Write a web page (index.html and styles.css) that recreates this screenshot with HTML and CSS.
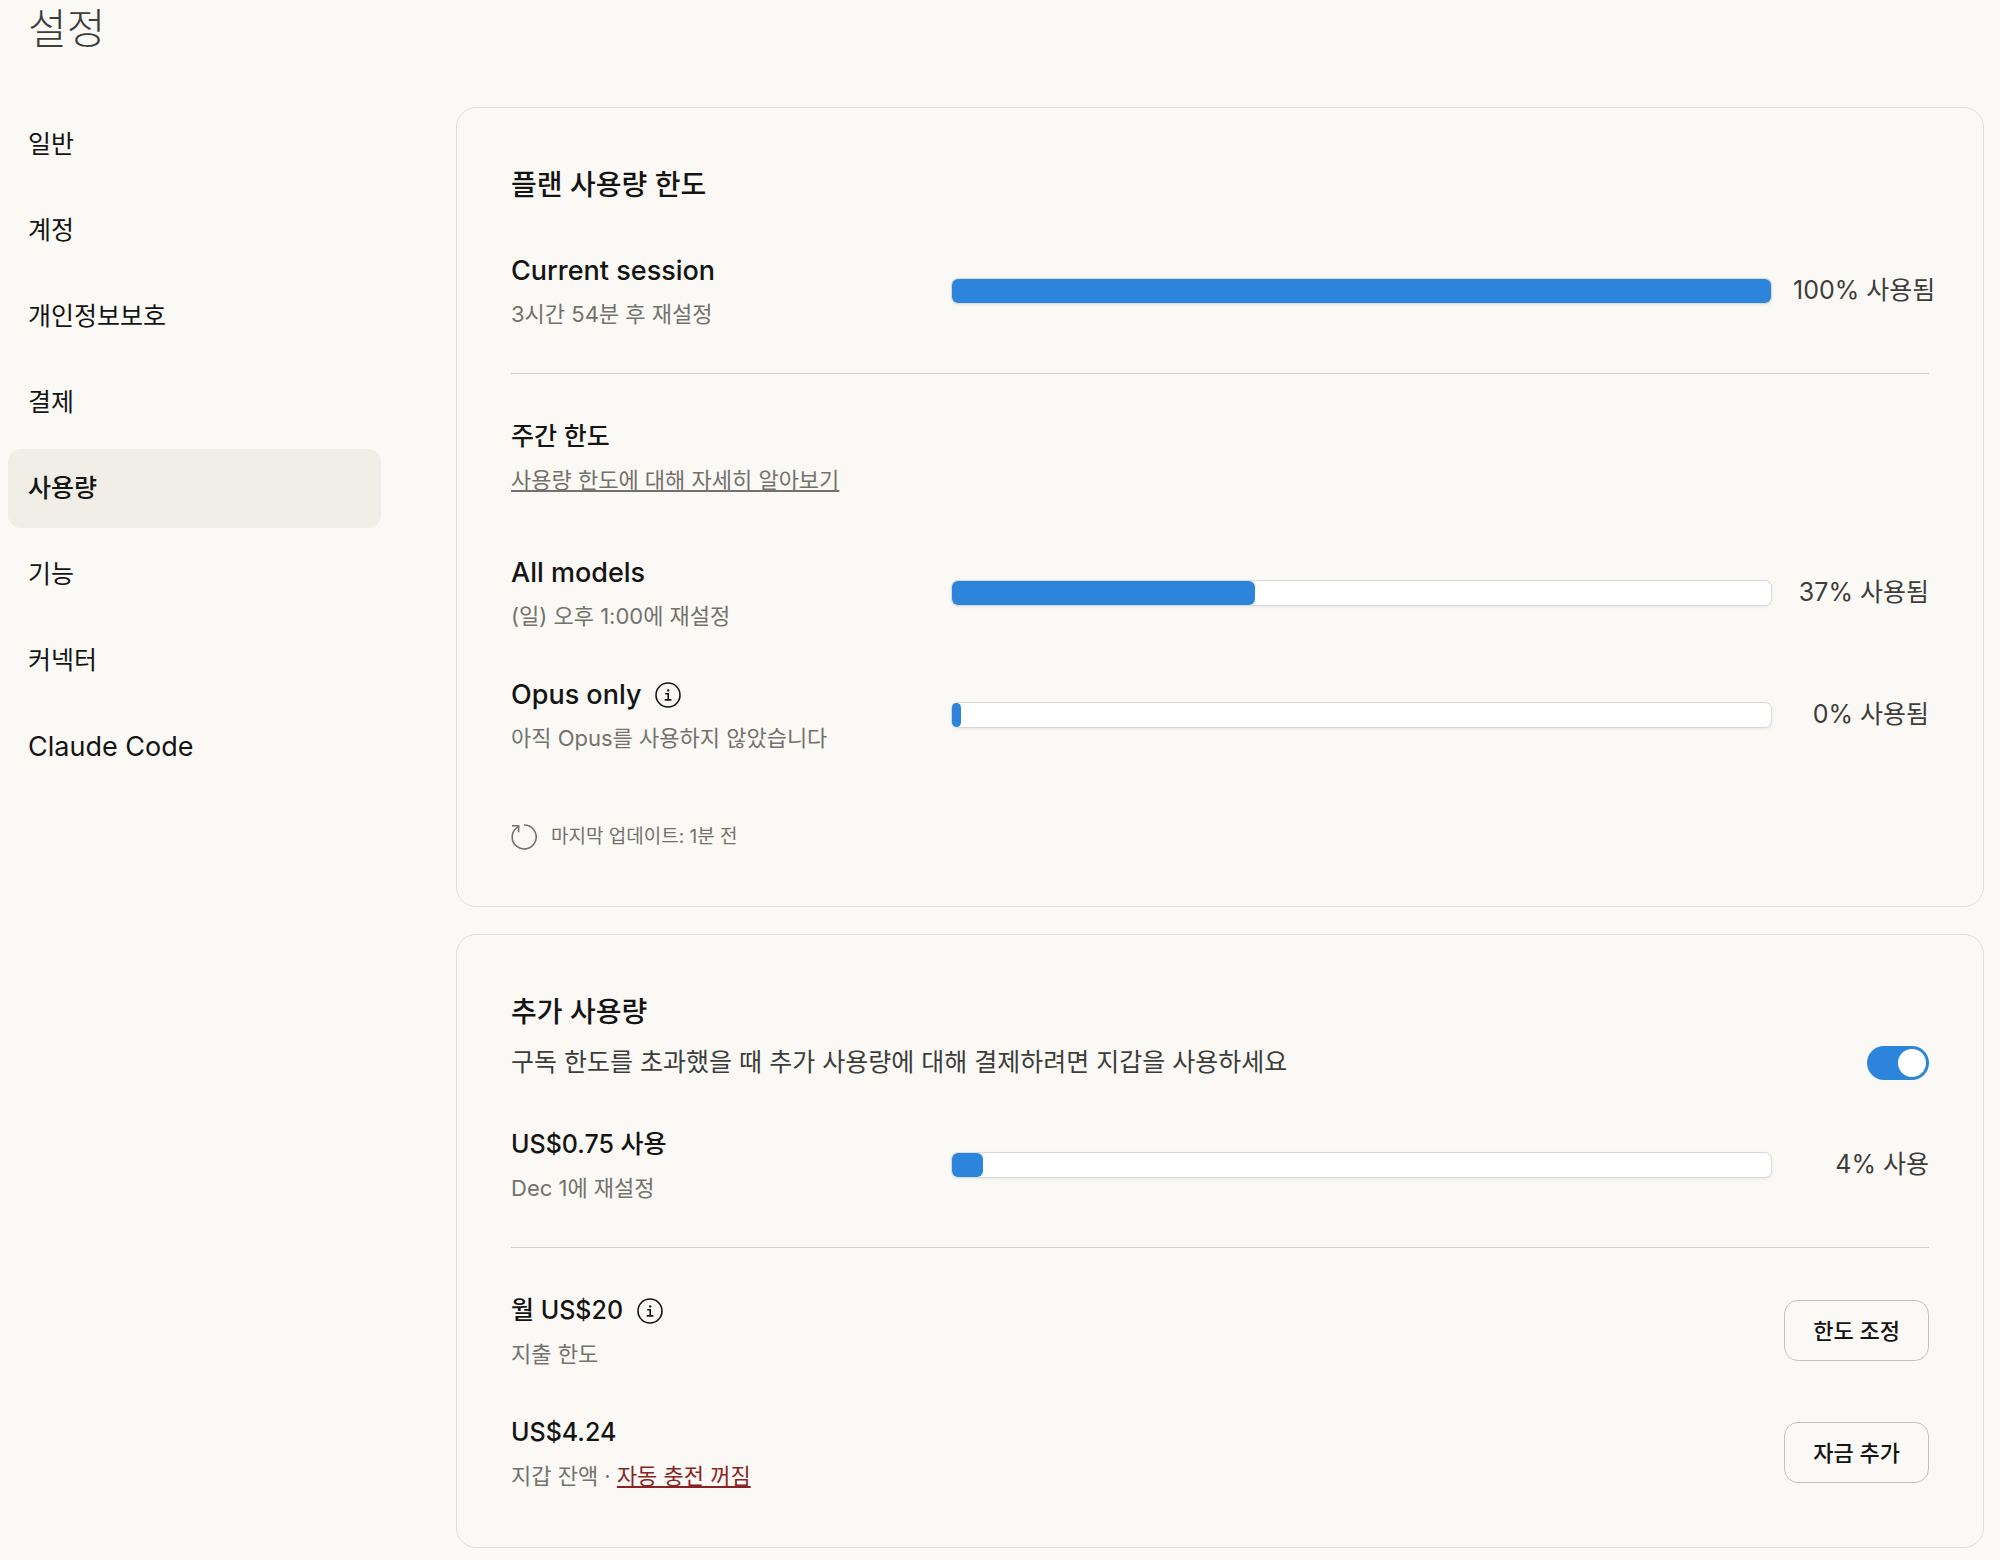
FILE: index.html
```html
<!DOCTYPE html>
<html lang="ko">
<head>
<meta charset="UTF-8" />
<meta name="viewport" content="width=device-width, initial-scale=1" />
<title>설정</title>
<link rel="stylesheet" href="styles.css">
</head>
<body>
  <h1>설정</h1>
  <div class="layout">
    <nav class="menu">
      <a href="#">일반</a>
      <a href="#">계정</a>
      <a href="#">개인정보보호</a>
      <a href="#">결제</a>
      <a href="#" class="active" aria-current="page">사용량</a>
      <a href="#">기능</a>
      <a href="#">커넥터</a>
      <a href="#" class="latin">Claude Code</a>
    </nav>

    <main>
      <section class="card">
        <h2>플랜 사용량 한도</h2>

        <div class="row">
          <div class="info">
            <div class="title latin" id="session">Current session</div>
            <div class="sub">3시간 54분 후 재설정</div>
          </div>
          <div class="bar" role="progressbar" aria-labelledby="session" aria-valuenow="100"><div class="fill" style="width: 100%"></div></div>
          <div class="value">100% 사용됨</div>
        </div>

        <hr>

        <div class="info weekly">
          <h3 class="title">주간 한도</h3>
          <a href="#" class="sub">사용량 한도에 대해 자세히 알아보기</a>
        </div>

        <div class="row">
          <div class="info">
            <div class="title latin" id="models">All models</div>
            <div class="sub">(일) 오후 1:00에 재설정</div>
          </div>
          <div class="bar" role="progressbar" aria-labelledby="models" aria-valuenow="37"><div class="fill" style="width: 37%"></div></div>
          <div class="value">37% 사용됨</div>
        </div>

        <div class="row">
          <div class="info">
            <div class="title latin">
              <span id="opus">Opus only</span>
              <svg class="icon" viewBox="0 0 26 26" fill="none" stroke="currentColor" stroke-width="1.6">
                <circle cx="13" cy="13" r="12"/>
                <path d="M10.2 11.7h3v6M9.7 17.9h6.7"/>
                <circle cx="13.2" cy="8.4" r="1.2" fill="currentColor" stroke="none"/>
              </svg>
            </div>
            <div class="sub">아직 Opus를 사용하지 않았습니다</div>
          </div>
          <div class="bar" role="progressbar" aria-labelledby="opus" aria-valuenow="0"><div class="fill" style="width: 0%"></div></div>
          <div class="value">0% 사용됨</div>
        </div>

        <div class="updated">
          <button class="refresh" aria-label="새로고침">
            <svg class="icon" viewBox="0 0 26 26" fill="none" stroke="currentColor" stroke-width="1.6">
              <path d="M13 1a12 12 0 1 1-5.8 1.6"/>
              <path d="M1 1.8h6.6v6.4"/>
            </svg>
          </button>
          <span>마지막 업데이트: 1분 전</span>
        </div>
      </section>

      <section class="card">
        <div class="extra">
          <h2>추가 사용량</h2>
          <div class="extra-line">
            <label for="extraUsage">구독 한도를 초과했을 때 추가 사용량에 대해 결제하려면 지갑을 사용하세요</label>
            <input type="checkbox" id="extraUsage" class="toggle" role="switch" checked>
          </div>
        </div>

        <div class="row">
          <div class="info">
            <div class="title" id="spent">US$0.75 사용</div>
            <div class="sub">Dec 1에 재설정</div>
          </div>
          <div class="bar" role="progressbar" aria-labelledby="spent" aria-valuenow="4"><div class="fill" style="width: 3.8%"></div></div>
          <div class="value">4% 사용</div>
        </div>

        <hr>

        <div class="row between">
          <div class="info">
            <div class="title">
              <span>월 US$20</span>
              <svg class="icon" viewBox="0 0 26 26" fill="none" stroke="currentColor" stroke-width="1.6">
                <circle cx="13" cy="13" r="12"/>
                <path d="M10.2 11.7h3v6M9.7 17.9h6.7"/>
                <circle cx="13.2" cy="8.4" r="1.2" fill="currentColor" stroke="none"/>
              </svg>
            </div>
            <div class="sub">지출 한도</div>
          </div>
          <button class="btn">한도 조정</button>
        </div>

        <div class="row between">
          <div class="info">
            <div class="title">US$4.24</div>
            <div class="sub">지갑 잔액 · <a href="#" class="danger">자동 충전 꺼짐</a></div>
          </div>
          <button class="btn">자금 추가</button>
        </div>
      </section>
    </main>
  </div>
</body>
</html>
```
FILE: styles.css
```css
* {
  box-sizing: border-box;
}
body {
  margin: 0;
  padding: 4px 16px 12px 8px;
  background: #faf9f5;
  color: #141413;
  font-family: Inter, "Noto Sans CJK KR", sans-serif;
  font-size: 25px;
  line-height: 39px;
}
h1, h2, h3 {
  margin: 0;
}
h1 {
  padding-left: 20px;
  margin-bottom: 49px;
  color: #3d3d3a;
  font-family: "Liberation Serif", "Noto Sans CJK KR", serif;
  font-size: 42px;
  font-weight: 300;
  line-height: 52px;
}
a {
  color: inherit;
}
.layout {
  display: grid;
  grid-template-columns: 373px 1fr;
  gap: 75px;
  align-items: start;
}
.menu {
  display: flex;
  flex-direction: column;
  gap: 7px;
}
.menu a {
  padding: 20px;
  border-radius: 13px;
  text-decoration: none;
}
.menu a.active {
  background: #f0eee6;
  font-weight: 500;
}
main {
  display: flex;
  flex-direction: column;
  gap: 27px;
  padding-top: 2px;
}
.card {
  display: flex;
  flex-direction: column;
  gap: 43px;
  padding: 55px 54px;
  border: 1px solid #e0dfda;
  border-radius: 20px;
}
h2 {
  font-size: 28px;
  font-weight: 500;
  line-height: 45px;
}
hr {
  width: 100%;
  margin: 0;
  border: 0;
  border-top: 1px solid #d1d0cc;
}
.row {
  display: flex;
  align-items: center;
}
.row .info {
  flex: 0 0 440px;
}
.between {
  justify-content: space-between;
}
.info {
  display: flex;
  flex-direction: column;
  align-items: flex-start;
  gap: 8px;
}
.weekly {
  margin-bottom: 14px;
}
.title {
  display: flex;
  align-items: center;
  gap: 14px;
  font-size: 25px;
  font-weight: 500;
}
.latin {
  font-size: 27px;
}
.sub {
  color: #73726c;
  font-size: 22px;
  line-height: 32px;
}
.danger {
  color: #8a2424;
}
.icon {
  display: block;
  width: 26px;
  height: 26px;
}
.bar {
  flex: 1;
  height: 26px;
  border: 1px solid #d8d8d7;
  border-radius: 7px;
  background: #fff;
  box-shadow: 0 1px 3px rgba(0, 0, 0, 0.08);
}
.fill {
  min-width: 9px;
  height: 100%;
  border-radius: 6px;
  background: #2c84db;
}
/* long values run past the column instead of shrinking the bar */
.value {
  flex: 0 0 136px;
  min-width: 0;
  margin-left: 21px;
  color: #3d3d3a;
  text-align: right;
  white-space: nowrap;
}
.updated {
  display: flex;
  align-items: center;
  gap: 14px;
  margin-top: 26px;
  color: #73726c;
  font-size: 19px;
  line-height: 28px;
}
.refresh {
  padding: 0;
  border: 0;
  background: none;
  color: inherit;
  cursor: pointer;
}
.extra {
  display: flex;
  flex-direction: column;
  gap: 8px;
}
.extra-line {
  display: flex;
  align-items: center;
  justify-content: space-between;
  color: #3d3d3a;
}
.toggle {
  appearance: none;
  display: flex;
  align-items: center;
  justify-content: flex-end;
  width: 62px;
  height: 34px;
  margin: 0;
  padding: 3px;
  border-radius: 17px;
  background: #2c84db;
  cursor: pointer;
}
.toggle::before {
  content: "";
  width: 28px;
  height: 28px;
  border-radius: 50%;
  background: #fff;
}
.toggle:not(:checked) {
  justify-content: flex-start;
  background: #b0aea5;
}
.btn {
  height: 61px;
  padding: 0 28px;
  border: 1px solid #c4c3be;
  border-radius: 14px;
  background: none;
  color: inherit;
  font-family: inherit;
  font-size: 22px;
  font-weight: 500;
  line-height: 32px;
  cursor: pointer;
}
```
